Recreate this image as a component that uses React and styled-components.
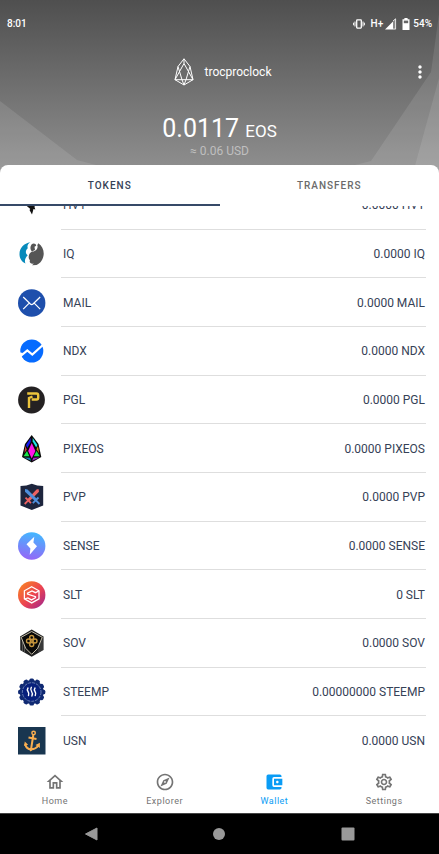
import React, { useState } from "react";
import styled, { createGlobalStyle, css } from "styled-components";
import {
  MdOutlineHome,
  MdOutlineExplore,
  MdAccountBalanceWallet,
  MdOutlineSettings,
  MdMoreVert,
} from "react-icons/md";

const GlobalStyle = createGlobalStyle`
  * { box-sizing: border-box; }
  body { margin: 0; background: #fff; font-family: Roboto, sans-serif; color: #364257; }
  button { font-family: inherit; border: 0; padding: 0; background: none; cursor: pointer; }
`;

const Screen = styled.div`
  display: flex;
  flex-direction: column;
  height: 100vh;
  overflow: hidden;
`;

const Header = styled.header`
  position: relative;
  flex: none;
  display: flex;
  flex-direction: column;
  padding-bottom: 15px;
  margin-bottom: -8px;
  color: #fff;
  background: linear-gradient(#4f4f4f, #909090);
`;

const Facets = styled.svg`
  position: absolute;
  inset: 0;
  width: 100%;
  height: 100%;
`;

const StatusBar = styled.div`
  position: relative;
  display: flex;
  align-items: center;
  justify-content: space-between;
  height: 48px;
  padding: 0 7px;
  font-size: 10px;
  font-weight: 500;
  line-height: 16px;
`;

const StatusIcons = styled.div`
  display: flex;
  align-items: center;
  gap: 4px;
  svg { display: block; }
`;

const Network = styled.span`
  display: flex;
  align-items: center;
  gap: 2px;
  padding-left: 2px;
`;

const Battery = styled.span`
  display: flex;
  align-items: center;
  gap: 3px;
  padding-left: 1px;
`;

const AccountBar = styled.div`
  position: relative;
  display: grid;
  grid-template-columns: 40px 1fr 38px;
  align-items: center;
  height: 48px;
`;

const Account = styled.div`
  grid-column: 2;
  display: flex;
  align-items: center;
  justify-content: center;
  gap: 11px;
  padding-left: 4px;
  font-size: 12px;
  line-height: 16px;
  svg { display: block; }
`;

const MenuButton = styled.button`
  color: #fff;
  height: 32px;
  display: flex;
  align-items: center;
  justify-content: center;
`;

const Balance = styled.div`
  position: relative;
  padding-top: 17px;
  text-align: center;
  font-size: 25px;
  line-height: 32px;
`;

const Unit = styled.span`
  font-size: 17px;
  line-height: 20px;
`;

const Fiat = styled.div`
  position: relative;
  text-align: center;
  font-size: 12px;
  line-height: 13px;
  color: #bfbfbf;
`;

const Sheet = styled.main`
  position: relative;
  flex: 1;
  min-height: 0;
  display: flex;
  flex-direction: column;
  background: #fff;
  border-radius: 8px 8px 0 0;
`;

const Tabs = styled.div`
  display: flex;
  flex: none;
`;

const Tab = styled.button`
  flex: 1;
  height: 41px;
  padding-top: 2px;
  font-size: 10px;
  font-weight: 500;
  letter-spacing: 1px;
  color: #6b6b6b;
  border-bottom: 2px solid transparent;
  ${(p) => p.$active && css`
    color: #364257;
    border-color: #364a68;
  `}
`;

const TokenViewport = styled.div`
  flex: 1;
  min-height: 0;
  display: flex;
  flex-direction: column;
  overflow: hidden;
`;

const TokenList = styled.ul`
  flex: 1;
  display: flex;
  flex-direction: column;
  margin: -25px 0 0;
  padding: 0;
  list-style: none;
`;

const TokenRow = styled.li`
  flex: 1;
  display: flex;
  align-items: stretch;
  gap: 15px;
  padding: 0 13px 0 18px;
`;

const TokenIcon = styled.svg`
  align-self: center;
  flex: none;
  width: 28px;
  height: 28px;
`;

const TokenInfo = styled.div`
  flex: 1;
  display: flex;
  align-items: center;
  justify-content: space-between;
  padding: 1px 1px 0 2px;
  font-size: 12px;
  line-height: 16px;
  border-bottom: 1px solid #dedede;
  ${TokenRow}:last-child & { border-color: transparent; }
`;

const BottomNav = styled.nav`
  flex: none;
  display: flex;
  height: 48px;
  background: #fff;
  box-shadow: 0 -1px 1px #f4f4f4;
`;

const NavLink = styled.a`
  flex: 1;
  display: flex;
  flex-direction: column;
  align-items: center;
  padding-top: 7px;
  gap: 3px;
  font-size: 9px;
  line-height: 12px;
  letter-spacing: 0.5px;
  text-decoration: none;
  color: ${(p) => (p.$active ? "#0a9cf5" : "#747474")};
`;

const SystemBar = styled.div`
  flex: none;
  display: flex;
  align-items: center;
  height: 41px;
  padding: 0 27px;
  background: #000;
  border-top: 1px solid #444;
`;

const SystemButton = styled.button`
  flex: 1;
  height: 32px;
  svg { display: block; margin: auto; }
`;

const EosLogo = () => (
  <svg width="20" height="28" viewBox="0 0 20 28" fill="none" stroke="#fff" strokeWidth="1" strokeLinejoin="round">
    <path d="M10 .8 4 8.5 1 21.7 10 27 19 21.7 16 8.5Z" />
    <path d="M10 .8v4.700M4 8.500l4 13.200 2 5.300 2-5.300 4-13.200M10 5.500 1 21.700h18Z" />
  </svg>
);

const VibrateIcon = () => (
  <svg width="12" height="10" viewBox="0 0 12 10" fill="none" stroke="#fff">
    <rect x="3.700" y=".900" width="4.600" height="8.200" rx=".5" strokeWidth="1.300" />
    <path d="M2 2.500v5M10 2.500v5M.600 3.700v2.600M11.400 3.700v2.600" strokeWidth="1" />
  </svg>
);

const SignalIcon = () => (
  <svg width="12" height="12" viewBox="0 0 12 12" fill="#fff">
    <path d="M0 11.500 8 3.400v8.100Z" />
    <path d="M8 3 10.600.800v10.300H8" fill="#888" stroke="#fff" strokeWidth=".800" />
  </svg>
);

const BatteryIcon = () => (
  <svg width="8" height="12" viewBox="0 0 8 12">
    <path d="M2.400 0h3.200v1.200H7.500V12H.500V1.200h1.900Z" fill="#fff" />
    <path d="M1.800 2.600h4.400v2.600H1.800Z" fill="#666" />
  </svg>
);

const gearTeeth = Array.from({ length: 12 }, (_, i) => i * 30);

const art = {
  HVT: <path d="M8 10h10l-1.500 6 .8 2.500-1.800-.5-1.500 5.500-2.500-4.500.8-1L8.800 15Z" fill="#111" />,
  IQ: (
    <>
      <path d="M12.500 2.300C5.800 3.300 1.500 8.200 1.500 14c0 4.500 2.300 7.800 6 9.500C6 20.500 7.500 17.500 9.700 15.200 7 13.500 7.500 10 9.800 8.200 8.800 5.500 10.200 3.500 12.500 2.300Z" fill="#068abb" />
      <path d="M20.300 3.300C24 5.500 25.900 10 25.700 14c-.2 5-3.200 9.500-7.200 11l-4.500.3 2-1.800c-3.500.8-5-1.200-4-3.200-2.500-2.300-1.300-7.500 2.300-8.800 3.700.2 6.200-3.500 5-6.200Z" fill="#555" />
      <path d="M13.800 11.500C12 9.500 12 6.500 13.500 4.500c2-1.800 4.500-.8 4.700 1.200l-1.700 1 .5 3.300Z" fill="#555" />
    </>
  ),
  MAIL: (
    <>
      <circle cx="13.700" cy="14" r="13.700" fill="#1e4fac" />
      <path d="m5.200 8 7.200 7q1.300 1.200 2.600 0l7.200-7M5.200 20.200l6-6m5 0 6 6" fill="none" stroke="#fff" strokeWidth="1.200" />
    </>
  ),
  NDX: (
    <>
      <circle cx="13.800" cy="14" r="11.500" fill="#066bff" />
      <path d="m1.500 20 7.800-6.500 5 4L26 7" fill="none" stroke="#fff" strokeWidth="2.200" />
      <path d="m0 15 5 1-3 5H0ZM27 5v7l-3-3Z" fill="#fff" />
    </>
  ),
  PGL: (
    <>
      <circle cx="13.500" cy="14" r="13.400" fill="#242122" />
      <path d="M9.200 7.500h9.300q1.700 0 1.700 1.700v2.600q0 1.700-1.700 1.700h-4.800M11 22V12l3.500-1.500" fill="none" stroke="#ecc43c" strokeWidth="2.400" />
    </>
  ),
  PIXEOS: (
    <>
      <path d="M13.700 0 20.500 9l2.800 13-9.600 5.500L4 22 7 9Z" fill="#080808" />
      <path d="m12.700 3-4.700 7 1.300 3 3.400-6Z" fill="#1717f0" />
      <path d="m14.700 3 4.700 7-1.200 2.500-3.500-6Z" fill="#20e7e4" />
      <path d="m13.700 8 3.700 8-3.700 7.500-3.500-7.500Z" fill="#ff16e8" />
      <path d="m9 16 2.300 5.200H5.500ZM18.500 16l3.300 5.200h-6Z" fill="#17e64b" />
      <path d="m7.300 11 1.500 3.500L6.500 18Z" fill="#c44" />
      <path d="m20 11 1 7-2.500-3.800Z" fill="#d69118" />
      <path d="m6 22.500 6 .2 1 3Z" fill="#1785b5" />
      <path d="m21.500 22.500-6.300.2-1 3Z" fill="#a329c8" />
    </>
  ),
  PVP: (
    <>
      <path d="M13.800.800Q19 3 25.200 3v19.500L13.800 27 2.500 22.500V3Q8.600 3 13.800.800Z" fill="#1d253d" />
      <path d="m20.500 6 .5 2.800L11.200 18.500l-2-2L18.500 6.500Z" fill="#ed6262" />
      <path d="m7.500 14.700 5.500 5.500M10 17.700l-3.300 3.300" stroke="#ed6262" strokeWidth="1.800" fill="none" />
      <path d="m7 6 2.500.5L19 16l-2 2L7 8.800Z" fill="#4e8edc" />
      <path d="m20.500 14.500-5.700 5.700M18 17.500l3.500 3.500" stroke="#4e8edc" strokeWidth="1.800" fill="none" />
    </>
  ),
  SENSE: (
    <>
      <defs>
        <linearGradient id="sense" x1=".6" y1="0" x2=".4" y2="1">
          <stop stopColor="#42b8ff" />
          <stop offset="1" stopColor="#9566f7" />
        </linearGradient>
      </defs>
      <circle cx="13.700" cy="14" r="13.700" fill="url(#sense)" />
      <path d="M16.300 4.800 8.500 12.200 12.400 16.500 11.700 22.700 19 14.300 15.400 10.500Z" fill="#fff" />
    </>
  ),
  SLT: (
    <>
      <defs>
        <linearGradient id="slt" x1="0" y1="0" x2="1" y2="1">
          <stop stopColor="#fb8b1c" />
          <stop offset=".55" stopColor="#eb4252" />
          <stop offset="1" stopColor="#982493" />
        </linearGradient>
      </defs>
      <circle cx="13.700" cy="14" r="13.700" fill="url(#slt)" />
      <g fill="none" stroke="#fff" strokeWidth="1.300">
        <path d="m13.700 5.700 7.300 4.100v8l-7.300 4.100-7.300-4.100v-8Z" />
        <path d="m20.800 10-3.300 1.700-3.500-1.800-4.500 2.300v.800l8 2.700v1l-4 2.200-3.600-1.900-3.300 1" />
      </g>
    </>
  ),
  SOV: (
    <>
      <path d="m13.700.500 11.800 7v13.500l-11.800 6.700-11.700-6.700V7.500Z" fill="#202020" />
      <path d="M2.500 21V7.500M4.500 22V11m2 12v-7M25 21V7.500M23 22V11m-2 12v-7" stroke="#777" strokeWidth=".600" />
      <path d="m13.700 2.500 10.500 5.800-4.500 11-6 6-6-6-4.500-11Z" fill="#080808" stroke="#d6ceb7" strokeWidth=".900" />
      <g fill="none" stroke="#c4943d" strokeWidth="1.400">
        <circle cx="13.700" cy="8.500" r="2" /><circle cx="10.500" cy="12" r="2" />
        <circle cx="17" cy="12" r="2" /><circle cx="13.700" cy="15.500" r="2" />
      </g>
      <path d="m11.500 10 4.500 4m0-4-4.500 4" stroke="#c4943d" />
    </>
  ),
  STEEMP: (
    <>
      <g fill="#102a73">
        {gearTeeth.map((a) => (
          <rect key={a} x="11.400" y=".400" width="4.600" height="5" rx="1.500" transform={`rotate(${a} 13.700 14)`} />
        ))}
        <circle cx="13.700" cy="14" r="12" />
      </g>
      <circle cx="13.700" cy="14" r="9.300" fill="#07207c" stroke="#7d93c4" strokeWidth=".800" strokeDasharray="3 1" />
      <path d="M10 10q-1.300 1.800 0 3.500t.5 4M13.300 9.300q-1.300 2 .2 4t.4 4.700M17 10q-1.300 1.800 0 3.500t.3 4" fill="none" stroke="#fff" strokeWidth="1.400" strokeLinecap="round" />
    </>
  ),
  USN: (
    <>
      <path d="M0 0h27.500v27.500H0Z" fill="#193650" />
      <g fill="none" stroke="#f9ae50" strokeWidth="2">
        <circle cx="15.600" cy="6" r="1.700" strokeWidth="1.500" />
        <path d="m15.300 8-2.200 14M10.500 10.500l8 1.400M7.200 17q1 5.300 5.900 5.300t7.400-4" />
      </g>
      <path d="m6 19 .8-4.600 3.300 3.300ZM17.500 18l4.400-2.200v5.200ZM10.500 22l4.600.6-2.500 2Z" fill="#f9ae50" />
    </>
  ),
};

const tokens = [
  ["HVT", "0.0000"],
  ["IQ", "0.0000"],
  ["MAIL", "0.0000"],
  ["NDX", "0.0000"],
  ["PGL", "0.0000"],
  ["PIXEOS", "0.0000"],
  ["PVP", "0.0000"],
  ["SENSE", "0.0000"],
  ["SLT", "0"],
  ["SOV", "0.0000"],
  ["STEEMP", "0.00000000"],
  ["USN", "0.0000"],
];

const links = [
  ["Home", MdOutlineHome],
  ["Explorer", MdOutlineExplore],
  ["Wallet", MdAccountBalanceWallet],
  ["Settings", MdOutlineSettings],
];

export default function App() {
  const [tab, setTab] = useState("TOKENS");
  return (
    <Screen>
      <GlobalStyle />
      <Header>
        <Facets viewBox="0 0 439 173" preserveAspectRatio="none" fill="#fff" fillOpacity=".1" aria-hidden="true">
          <path d="M0 101 77 160 96 165 125 173H0Z" />
          <path d="m439 14-8 58-60 89-16 4-20 8h104Z" />
          <path d="m439 78-26 95h26Z" />
        </Facets>
        <StatusBar>
          <span>8:01</span>
          <StatusIcons>
            <VibrateIcon />
            <Network>H+<SignalIcon /></Network>
            <Battery><BatteryIcon />54%</Battery>
          </StatusIcons>
        </StatusBar>
        <AccountBar>
          <Account><EosLogo />trocproclock</Account>
          <MenuButton aria-label="More options"><MdMoreVert size={20} /></MenuButton>
        </AccountBar>
        <Balance>0.0117 <Unit>EOS</Unit></Balance>
        <Fiat>≈ 0.06 USD</Fiat>
      </Header>
      <Sheet>
        <Tabs role="tablist">
          {["TOKENS", "TRANSFERS"].map((name) => (
            <Tab key={name} role="tab" aria-selected={tab === name} $active={tab === name} onClick={() => setTab(name)}>
              {name}
            </Tab>
          ))}
        </Tabs>
        <TokenViewport>
          <TokenList>
            {tokens.map(([name, amount]) => (
              <TokenRow key={name}>
                <TokenIcon viewBox="0 0 28 28" aria-hidden="true">{art[name]}</TokenIcon>
                <TokenInfo>
                  <span>{name}</span>
                  <span>{amount} {name}</span>
                </TokenInfo>
              </TokenRow>
            ))}
          </TokenList>
        </TokenViewport>
      </Sheet>
      <BottomNav>
        {links.map(([name, Icon]) => (
          <NavLink key={name} href="#" $active={name === "Wallet"}>
            <Icon size={20} />
            {name}
          </NavLink>
        ))}
      </BottomNav>
      <SystemBar>
        <SystemButton aria-label="Back">
          <svg width="14" height="16" viewBox="0 0 14 16"><path d="M13 2v12L1.500 8Z" fill="#999" stroke="#999" strokeLinejoin="round" /></svg>
        </SystemButton>
        <SystemButton aria-label="Home screen">
          <svg width="14" height="14" viewBox="0 0 14 14"><circle cx="7" cy="7" r="6" fill="#999" /></svg>
        </SystemButton>
        <SystemButton aria-label="Recent apps">
          <svg width="14" height="14" viewBox="0 0 14 14"><rect x=".500" y=".500" width="13" height="13" rx="1" fill="#999" /></svg>
        </SystemButton>
      </SystemBar>
    </Screen>
  );
}
